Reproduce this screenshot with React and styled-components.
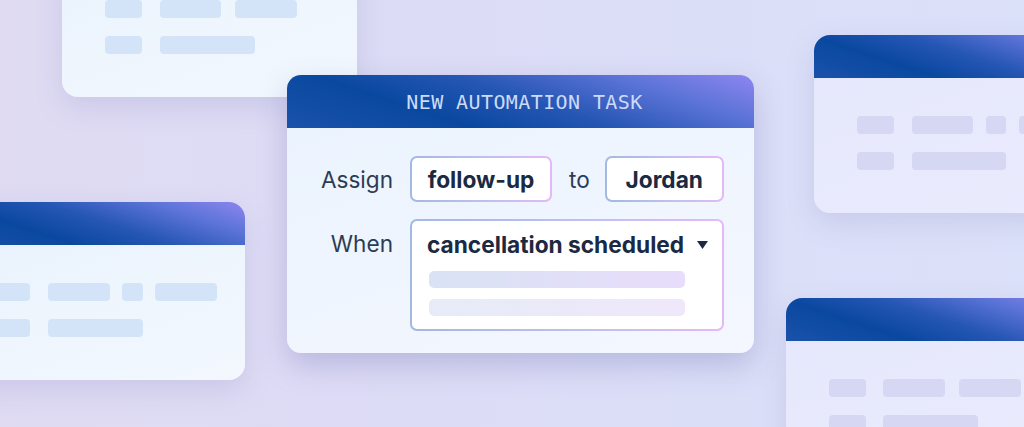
import { styled, createGlobalStyle } from "styled-components";

const GlobalStyle = createGlobalStyle`
    * { box-sizing: border-box; }
    html, body { margin: 0; padding: 0; }
    body {
        font-family: Inter, "Noto Sans", sans-serif;
        background: #dddcf5;
    }
`;

const headerGradient = `linear-gradient(198deg, #8d86ef 0%, #5d74d8 22%, #2556b4 48%, #0a48a0 70%, #1a52aa 100%)`;

// background cards: position, tint and bar rows
const bgCards = [
    { x: 62, y: -81, tint: "blue", rows: [[37, 61, 62], [37, 95]], gaps: [18, 14] },
    { x: -50, y: 202, tint: "blue", rows: [[37, 62, 21, 62], [37, 95]], gaps: [18, 12, 12] },
    { x: 814, y: 35, tint: "violet", rows: [[37, 61, 20, 62], [37, 94]], gaps: [18, 13, 13] },
    { x: 786, y: 298, tint: "violet", rows: [[37, 62, 62], [37, 95]], gaps: [17, 14] },
];

function App() {
    return (
        <>
            <GlobalStyle />
            <Stage>
                {bgCards.map((c, i) => (
                    <BgCard key={i} $tint={c.tint} style={{ left: c.x, top: c.y }}>
                        <BgHeader />
                        <BgBody>
                            {c.rows.map((row, r) => (
                                <BarRow key={r}>
                                    {row.map((w, b) => (
                                        <Bar
                                            key={b}
                                            $tint={c.tint}
                                            style={{ width: w, marginLeft: b === 0 ? 0 : c.gaps[b - 1] }}
                                        />
                                    ))}
                                </BarRow>
                            ))}
                        </BgBody>
                    </BgCard>
                ))}

                <TaskCard>
                    <TaskHeader>NEW AUTOMATION TASK</TaskHeader>
                    <TaskBody>
                        <Label>Assign</Label>
                        <Line>
                            <Field $w={142}>follow-up</Field>
                            <Joiner>to</Joiner>
                            <Field $w={119}>Jordan</Field>
                        </Line>

                        <Label $top>When</Label>
                        <Select>
                            <SelectHead>
                                <span>cancellation scheduled</span>
                                <Caret viewBox="0 0 11 8">
                                    <path d="M0 0 H11 L5.5 8 Z" fill="#1b2a42" />
                                </Caret>
                            </SelectHead>
                            <Option $strong />
                            <Option />
                        </Select>
                    </TaskBody>
                </TaskCard>
            </Stage>
        </>
    );
}

let Stage = styled.div`
    position: relative;
    width: 1024px;
    height: 427px;
    overflow: hidden;
    padding: 75px 0 0 287px;
    background: linear-gradient(90deg, #e0dbf3 0%, #dcdcf6 45%, #dbe1f9 100%);
`;

let BgCard = styled.div`
    position: absolute;
    width: 295px;
    height: 178px;
    border-radius: 16px;
    overflow: hidden;
    display: flex;
    flex-direction: column;
    background: ${p => p.$tint === "blue"
        ? "linear-gradient(160deg, #e8f2fd 0%, #f3f8fe 100%)"
        : "linear-gradient(160deg, #e5e7fc 0%, #eaebfd 100%)"};
    box-shadow: 0 10px 28px rgba(110, 110, 180, 0.18);
`;

let BgHeader = styled.div`
    height: 43px;
    flex-shrink: 0;
    background: ${headerGradient};
`;

let BgBody = styled.div`
    display: flex;
    flex-direction: column;
    gap: 18px;
    padding: 38px 0 0 43px;
`;

let BarRow = styled.div`
    display: flex;
`;

let Bar = styled.div`
    height: 18px;
    border-radius: 4px;
    flex-shrink: 0;
    background: ${p => (p.$tint === "blue" ? "#d4e4f8" : "#d5d7f3")};
`;

let TaskCard = styled.div`
    position: relative;
    width: 467px;
    height: 278px;
    border-radius: 14px;
    overflow: hidden;
    background: linear-gradient(160deg, #eaf3fe 0%, #f4f7fe 100%);
    box-shadow: 0 12px 30px rgba(90, 90, 160, 0.28);
`;

let TaskHeader = styled.div`
    height: 53px;
    display: flex;
    align-items: center;
    justify-content: center;
    padding: 1px 0 0 8px;
    background: ${headerGradient};
    color: #cddbf8;
    font-family: "DejaVu Sans Mono", "Liberation Mono", monospace;
    font-size: 20px;
    letter-spacing: 0.4px;
`;

let TaskBody = styled.div`
    display: grid;
    grid-template-columns: 106px 1fr;
    column-gap: 17px;
    row-gap: 17px;
    padding: 28px 30px 22px 0;
`;

let Label = styled.div`
    text-align: right;
    align-self: ${p => (p.$top ? "start" : "center")};
    padding-top: ${p => (p.$top ? "11px" : "0")};
    font-size: 22.6px;
    color: #2c3c54;
`;

let Line = styled.div`
    display: flex;
    align-items: center;
`;

let gradientBorder = `
    border: 2px solid transparent;
    border-radius: 7px;
    background:
        linear-gradient(#fff, #fff) padding-box,
        linear-gradient(90deg, #a2b9e0 0%, #bfc0ee 55%, #e4b9f6 100%) border-box;
`;

let Field = styled.div`
    ${gradientBorder}
    width: ${p => p.$w}px;
    height: 46px;
    display: flex;
    align-items: center;
    justify-content: center;
    font-size: 22.7px;
    font-weight: 700;
    color: #1b2a42;
`;

let Joiner = styled.span`
    font-size: 22.6px;
    color: #2c3c54;
    margin: 0 15px 0 17px;
`;

let Select = styled.div`
    ${gradientBorder}
    height: 112px;
    display: flex;
    flex-direction: column;
    gap: 11px;
    padding: 10px 14px 13px 15px;
`;

let SelectHead = styled.div`
    display: flex;
    align-items: center;
    justify-content: space-between;
    font-size: 22.7px;
    font-weight: 700;
    color: #1b2a42;
    line-height: 27px;
    margin-bottom: 2px;
`;

let Caret = styled.svg`
    width: 11px;
    height: 8px;
`;

let Option = styled.div`
    width: 256px;
    height: 18px;
    margin-left: 2px;
    border-radius: 5px;
    background: ${p => p.$strong
        ? "linear-gradient(90deg, #d9e3f4 0%, #e1dff8 55%, #e8ddfb 100%)"
        : "linear-gradient(90deg, #e6ecf7 0%, #ebe9f9 55%, #efe8fb 100%)"};
`;

export default App;
